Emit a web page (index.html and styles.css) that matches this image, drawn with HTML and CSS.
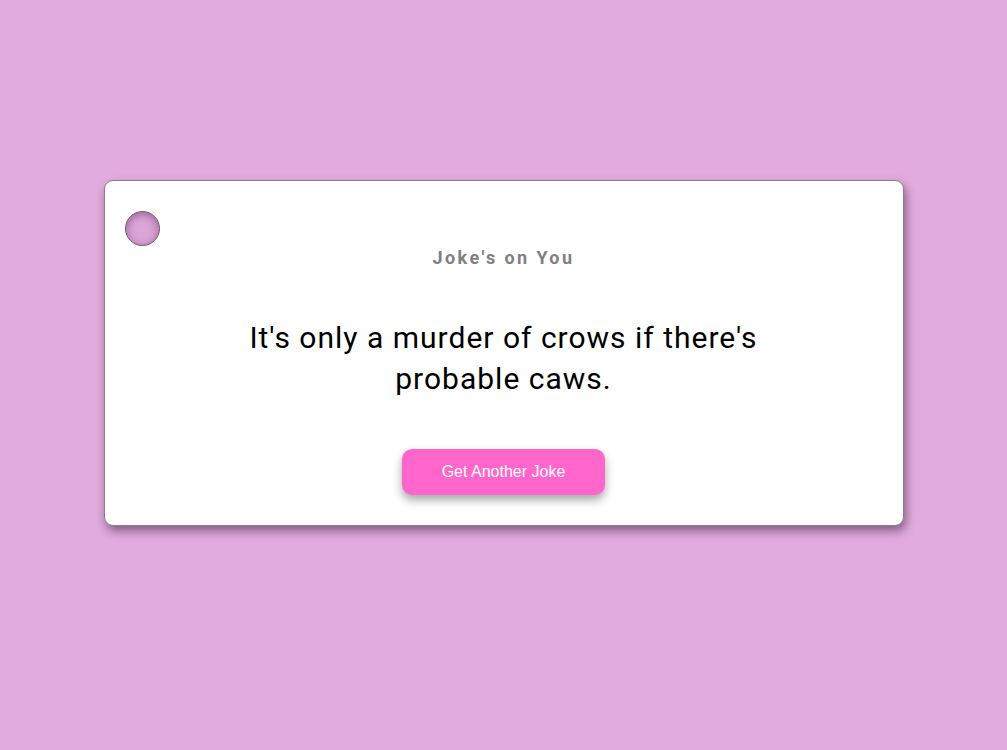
FILE: index.html
```html
<!DOCTYPE html>
<html lang="en">
<head>
<meta charset="utf-8">
<title>Joke's on You</title>
<link rel="stylesheet" href="styles.css">
</head>
<body>
  <main class="card">
    <span class="hole"></span>
    <h1 class="title">Joke's on You</h1>
    <p class="joke">It's only a murder of crows if there's probable caws.</p>
    <button class="btn">Get Another Joke</button>
  </main>
</body>
</html>
```
FILE: styles.css
```css
html, body {
  margin: 0;
  padding: 0;
}
body {
  background: #e1abdd;
  min-height: 750px;
  font-family: Roboto, "Liberation Sans", sans-serif;
  display: flex;
  justify-content: center;
  align-items: flex-start;
}
.card {
  position: relative;
  box-sizing: border-box;
  margin-top: 180px;
  width: 800px;
  height: 346px;
  background: #fff;
  border: 1px solid #888088;
  border-radius: 9px;
  box-shadow: 2px 5px 10px rgba(60, 30, 60, 0.55);
  display: flex;
  flex-direction: column;
  align-items: center;
  padding-top: 65px;
}
.hole {
  position: absolute;
  left: 20px;
  top: 30px;
  width: 33px;
  height: 33px;
  border-radius: 50%;
  background: #dca5d8;
  border: 1px solid #74546f;
  box-shadow: inset 0 2px 8px rgba(90, 45, 90, 0.55);
}
.title {
  margin: 0;
  font-size: 18px;
  font-weight: 700;
  letter-spacing: 2.4px;
  color: #808080;
  line-height: 24px;
}
.joke {
  margin: 47px 0 0;
  width: 560px;
  text-align: center;
  font-size: 30px;
  font-weight: 400;
  letter-spacing: 1px;
  line-height: 41px;
  color: #000;
}
.btn {
  margin-top: 50px;
  width: 203px;
  height: 46px;
  border: none;
  border-radius: 10px;
  background: #ff66cc;
  color: #fff;
  font-family: "Liberation Sans", Arial, sans-serif;
  font-size: 16px;
  box-shadow: 0 5px 10px rgba(0, 0, 0, 0.35);
  cursor: pointer;
}
```
